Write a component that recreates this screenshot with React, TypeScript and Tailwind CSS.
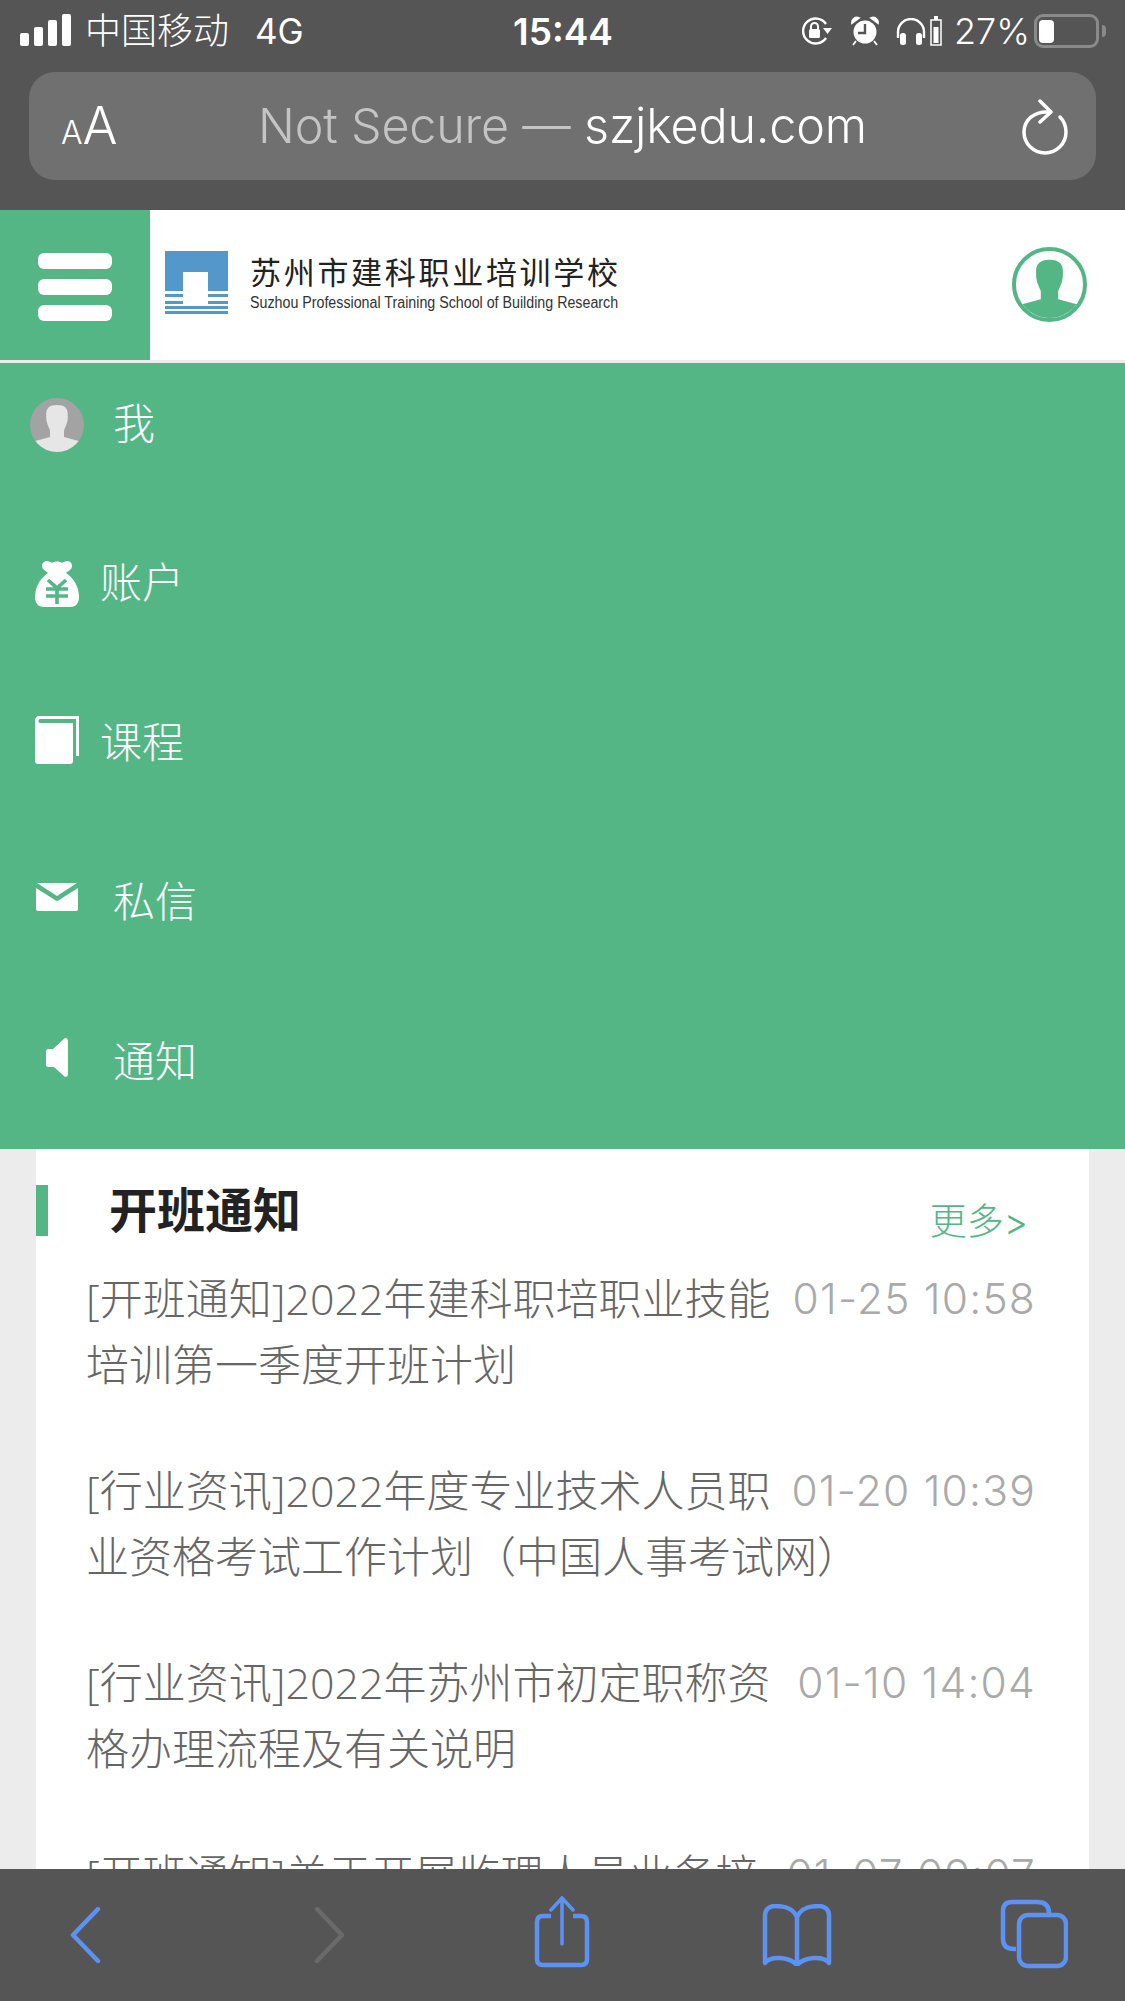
import type { ReactNode } from "react";

const sans = "font-['Inter','Noto_Sans_CJK_SC',sans-serif]";
const listFont = "font-['Open_Sans','Noto_Sans_CJK_SC',sans-serif]";

const notices = [
  { title: "[开班通知]2022年建科职培职业技能培训第一季度开班计划", time: "01-25 10:58" },
  { title: "[行业资讯]2022年度专业技术人员职业资格考试工作计划（中国人事考试网）", time: "01-20 10:39" },
  { title: "[行业资讯]2022年苏州市初定职称资格办理流程及有关说明", time: "01-10 14:04" },
  { title: "[开班通知]关于开展监理人员业务培训的通知", time: "01-07 09:07" },
];

const Person = ({ fill }: { fill: string }) => (
  <path
    fill={fill}
    d="M50 13C36 13 30 19 30 30c0 6 0 10 1 14 2 8 5 12 6 16v12L8 80v20h84V80L63 72V60c1-4 4-8 6-16 1-4 1-8 1-14 0-11-6-17-20-17z"
  />
);

const MenuRow = ({ icon, label, gap }: { icon: ReactNode; label: string; gap: string }) => (
  <div className="flex h-[159.5px] items-center pl-[30px]">
    <div className="flex w-[54px] shrink-0 justify-center">{icon}</div>
    <span className={`text-[42px] leading-none font-light text-white ${gap}`}>{label}</span>
  </div>
);

export default function App() {
  return (
    <div className={`flex h-[2001px] w-[1125px] flex-col overflow-hidden bg-[#ececec] ${sans}`}>
      {/* Safari top chrome */}
      <div className="h-[210px] shrink-0 bg-[#555555] px-[29px]">
        <div className="flex h-[62px] items-center whitespace-nowrap text-white [&>*]:shrink-0">
          <div className="-ml-[9px] flex items-end gap-[5px] self-end pb-[16px]">
            <i className="h-[13px] w-[9px] rounded-[2px] bg-white" />
            <i className="h-[19px] w-[9px] rounded-[2px] bg-white" />
            <i className="h-[26px] w-[9px] rounded-[2px] bg-white" />
            <i className="h-[32px] w-[9px] rounded-[2px] bg-white" />
          </div>
          <span className="ml-[14px] w-[144px] text-[36px] leading-none font-light">中国移动</span>
          <span className="ml-[26px] w-[47px] text-[35px] leading-none font-normal">4G</span>
          <span className="ml-[211px] w-[99px] text-[37px] leading-none font-semibold">15:44</span>
          <svg className="ml-[189px]" width="32" height="28" viewBox="0 0 32 28" fill="none">
            <path d="M25 7A12.500 12.500 0 1 0 25 21" stroke="#fff" strokeWidth="2.400" />
            <path d="M22 11h9l-4.500 6z" fill="#fff" />
            <rect x="8" y="12" width="11" height="9" rx="1.500" fill="#fff" />
            <path d="M10 12V9.500a3.500 3.500 0 0 1 7 0V12" stroke="#fff" strokeWidth="2" />
          </svg>
          <svg className="ml-[18px]" width="28" height="30" viewBox="0 0 28 30">
            <circle cx="14" cy="16" r="11.500" fill="#fff" />
            <path d="M14 8v9H7" stroke="#555" strokeWidth="2.400" fill="none" />
            <path d="M1 7a5 5 0 0 1 7-5zM27 7a5 5 0 0 0-7-5zM5 25l-3 4M23 25l3 4" fill="#fff" stroke="#fff" strokeWidth="1.800" />
          </svg>
          <svg className="ml-[17px]" width="30" height="27" viewBox="0 0 30 27" fill="none">
            <path d="M2 20V14a13 13 0 0 1 26 0v6" stroke="#fff" strokeWidth="2.400" />
            <rect x="4" y="15" width="6" height="12" rx="2.500" fill="#fff" />
            <rect x="20" y="15" width="6" height="12" rx="2.500" fill="#fff" />
          </svg>
          <svg className="ml-[4px]" width="12" height="30" viewBox="0 0 12 30" fill="none">
            <rect x="1" y="4" width="10" height="25" stroke="#fff" strokeWidth="1.500" />
            <rect x="4" y="0" width="4" height="4" fill="#fff" />
            <rect x="3.500" y="11" width="5" height="16" fill="#fff" />
          </svg>
          <span className="ml-[12px] w-[73px] text-[36px] leading-none font-light">27%</span>
          <div className="ml-[7px] flex h-[34px] w-[65px] items-center rounded-[9px] border-[3px] border-[#8a8a8a] pl-[2px]">
            <div className="h-[23px] w-[15px] rounded-[4px] bg-white" />
          </div>
          <div className="ml-[3px] h-[12px] w-[4px] rounded-r-full bg-[#8a8a8a]" />
        </div>
        <div className="relative mt-[10px] flex h-[108px] items-center justify-center rounded-[26px] bg-[#707070]">
          <span className="absolute bottom-[28px] left-[32px] flex items-baseline leading-none font-light text-white">
            <span className="text-[32px]">A</span>
            <span className="text-[52px]">A</span>
          </span>
          <span className="text-[48.5px] leading-none font-light tracking-[-0.2px]">
            <span className="text-[#c4c4c4]">Not Secure — </span>
            <span className="text-white">szjkedu.com</span>
          </span>
          <svg className="absolute top-[27px] right-[28px]" width="46" height="56" viewBox="0 0 46 56" fill="none">
            <path d="M27 13C12 12 2 21 2 33a21 21 0 0 0 42 0c0-6-2-11-6-15" stroke="#fff" strokeWidth="3.500" strokeLinecap="round" />
            <path d="M18 2l11 11-11 10" stroke="#fff" strokeWidth="3.500" strokeLinecap="round" strokeLinejoin="round" />
          </svg>
        </div>
      </div>

      {/* Site header */}
      <header className="flex h-[150px] shrink-0 bg-white">
        <div className="flex w-[150px] flex-col items-center justify-center gap-[10px] bg-[#54b685] pt-[3px]">
          <i className="h-[16px] w-[74px] rounded-[6px] bg-white" />
          <i className="h-[16px] w-[74px] rounded-[6px] bg-white" />
          <i className="h-[16px] w-[74px] rounded-[6px] bg-white" />
        </div>
        <svg className="mt-[41px] ml-[15px]" width="63" height="63" viewBox="0 0 63 63">
          <rect width="63" height="40" fill="#5397cb" />
          <rect x="18" y="21" width="25" height="22" fill="#fff" />
          <rect y="43" width="18" height="3" fill="#5397cb" />
          <rect x="43" y="43" width="20" height="3" fill="#5397cb" />
          <rect y="50" width="18" height="3" fill="#5397cb" />
          <rect x="43" y="50" width="20" height="3" fill="#5397cb" />
          <rect y="55" width="63" height="3" fill="#5397cb" />
          <rect y="60" width="63" height="3" fill="#5397cb" />
        </svg>
        <div className="mt-[41px] ml-[22px] w-[370px]">
          <div className="text-[31px] leading-[44px] tracking-[2.700px] whitespace-nowrap text-[#222]">苏州市建科职业培训学校</div>
          <div className="-mt-[1px] origin-left scale-x-[0.89] font-['Liberation_Sans',sans-serif] text-[16px] leading-[18px] whitespace-nowrap text-[#333]">
            Suzhou Professional Training School of Building Research
          </div>
        </div>
        <div className="mt-[37px] mr-[38px] ml-auto h-[75px] w-[75px] overflow-hidden rounded-full border-[4px] border-[#54b685]">
          <svg viewBox="0 0 100 100" className="h-full w-full">
            <Person fill="#54b685" />
          </svg>
        </div>
      </header>

      {/* Expanded nav */}
      <nav className="mt-[3px] flex h-[786px] shrink-0 flex-col bg-[#54b685]">
        <div className="-mt-[19px]">
          <MenuRow
            gap="ml-[29px]"
            label="我"
            icon={
              <div className="mt-[3px] h-[54px] w-[54px] overflow-hidden rounded-full bg-[#a3a3a3]">
                <svg viewBox="0 0 100 100" className="h-full w-full">
                  <Person fill="#e6e6e6" />
                </svg>
              </div>
            }
          />
        </div>
        <MenuRow
          gap="ml-[16px]"
          label="账户"
          icon={
            <svg className="mt-[2px]" width="44" height="46" viewBox="0 0 44 46">
              <path
                fill="#fff"
                d="M11 0c3 0 5 1 6 2 2-2 8-2 10 0 1-1 3-2 6-2 4 1 5 5 3 8l-5 4c6 4 13 12 13 24 0 6-3 10-9 10H9c-6 0-9-4-9-10 0-12 7-20 13-24L8 8C6 5 7 1 11 0z"
              />
              <path fill="none" stroke="#54b685" strokeWidth="3.600" d="M13 19l9 8 9-8M11 28h22M11 35h22M22 27v16" />
            </svg>
          }
        />
        <MenuRow
          gap="ml-[16px]"
          label="课程"
          icon={
            <svg className="mb-[6px]" width="44" height="48" viewBox="0 0 44 48">
              <path fill="#fff" d="M4 0h40v40h-3V3H5C3 3 3 7 5 7h33v38c0 2-1 3-3 3H3c-2 0-3-1-3-3V4c0-2 2-4 4-4z" />
            </svg>
          }
        />
        <MenuRow
          gap="ml-[29px]"
          label="私信"
          icon={
            <svg className="mb-[10px]" width="42" height="28" viewBox="0 0 42 28">
              <path fill="#fff" d="M1 0h40L21 13zM0 5l19 12c1 1 3 1 4 0L42 5v21c0 1-1 2-2 2H2c-1 0-2-1-2-2z" />
            </svg>
          }
        />
        <MenuRow
          gap="ml-[29px]"
          label="通知"
          icon={
            <svg className="mb-[8px]" width="22" height="39" viewBox="0 0 22 39">
              <path fill="#fff" d="M19 0c2 0 3 1 3 3v33c0 2-1 3-3 3L8 29H2c-1 0-2-1-2-2V13c0-1 1-2 2-2h5z" />
            </svg>
          }
        />
      </nav>

      {/* Notices */}
      <main className="mx-[36px] flex-1 overflow-hidden bg-white">
        <div className="flex h-[117px] items-start pt-[36px]">
          <div className="h-[51px] w-[12px] bg-[#54b685]" />
          <h2 className="ml-[61px] text-[48px] leading-[51px] font-semibold text-[#222]">开班通知</h2>
          <a className="mt-[15px] mr-[61px] ml-auto text-[37px] leading-[44px] font-light text-[#54b685]">更多&gt;</a>
        </div>
        <ul className={`pr-[53px] pl-[50px] ${listFont}`}>
          {notices.map((n) => (
            <li key={n.time} className="h-[192px]">
              <span className="float-right ml-[14px] font-['Inter',sans-serif] text-[42.5px] leading-[66px] font-light tracking-[1.200px] whitespace-nowrap text-[#aaa]">{n.time}</span>
              <span className="text-[43px] leading-[66px] font-light text-[#666]">{n.title}</span>
            </li>
          ))}
        </ul>
      </main>

      {/* Safari bottom toolbar */}
      <footer className="relative flex h-[132px] shrink-0 items-center bg-[#555555]">
        <svg className="absolute top-[38px] left-[70px]" width="32" height="56" viewBox="0 0 32 56" fill="none">
          <path d="M28 2L3 28l25 26" stroke="#5c92f3" strokeWidth="4.500" strokeLinecap="round" strokeLinejoin="round" />
        </svg>
        <svg className="absolute top-[38px] left-[313px]" width="32" height="56" viewBox="0 0 32 56" fill="none">
          <path d="M4 2l25 26L4 54" stroke="#6a6a6a" strokeWidth="4.500" strokeLinecap="round" strokeLinejoin="round" />
        </svg>
        <svg className="absolute top-[27px] left-[534px]" width="56" height="72" viewBox="0 0 56 72" fill="none">
          <path d="M17 20H9c-4 0-6 2-6 6v37c0 4 2 6 6 6h38c4 0 6-2 6-6V26c0-4-2-6-6-6h-8" stroke="#5c92f3" strokeWidth="4.500" />
          <path d="M28 48V3M17 14L28 2l11 12" stroke="#5c92f3" strokeWidth="3.500" strokeLinecap="round" />
        </svg>
        <svg className="absolute top-[35px] left-[762px]" width="70" height="62" viewBox="0 0 70 62" fill="none">
          <path d="M35 13C31 4 23 2 13 2 8 2 3 5 3 11v48c5-7 24-7 32 2 8-9 27-9 32-2V11c0-6-5-9-10-9-10 0-18 2-22 11zM35 13v48" stroke="#5c92f3" strokeWidth="4.500" strokeLinejoin="round" />
        </svg>
        <svg className="absolute top-[30px] left-[1000px]" width="68" height="70" viewBox="0 0 68 70" fill="none">
          <path d="M16 50h-2c-7 0-11-3-11-10V12C3 5 7 3 12 3h25c6 0 12 2 12 11" stroke="#5c92f3" strokeWidth="4.500" />
          <rect x="19" y="16" width="47" height="51" rx="9" stroke="#5c92f3" strokeWidth="4.500" />
        </svg>
      </footer>
    </div>
  );
}
